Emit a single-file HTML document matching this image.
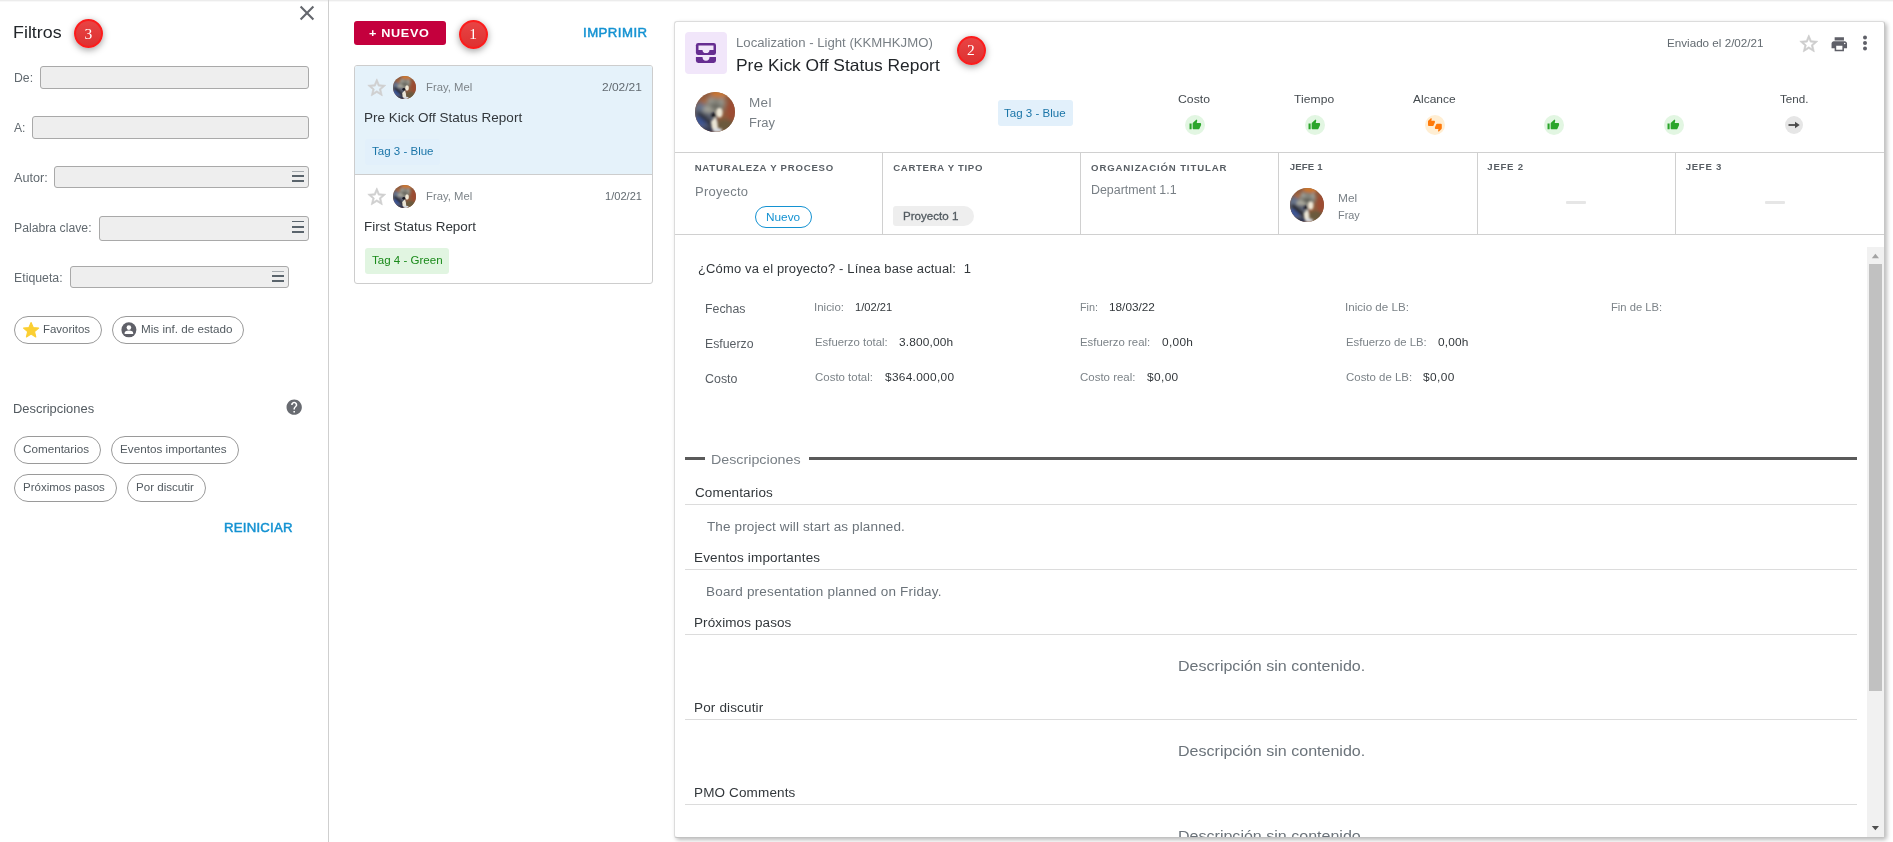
<!DOCTYPE html>
<html lang="es"><head><meta charset="utf-8"><title>Informes de estado</title>
<style>
html,body{margin:0;padding:0;background:#fff;}
body{width:1893px;height:842px;position:relative;overflow:hidden;font-family:"Liberation Sans", sans-serif;}
.t{position:absolute;white-space:nowrap;font-family:"Liberation Sans", sans-serif;}
.a{position:absolute;box-sizing:border-box;}
.badge{position:absolute;width:29px;height:29px;border-radius:50%;background:linear-gradient(#e84444,#de3131);box-sizing:border-box;border:2px solid #fb1c1c;box-shadow:0 2px 7px rgba(0,0,0,.38);}
.inp{position:absolute;box-sizing:border-box;background:#eee;border:1px solid #a9a9a9;border-radius:3px;}
.chip{position:absolute;box-sizing:border-box;border:1px solid #9a9a9a;border-radius:14px;height:28px;background:#fff;}
.tag{position:absolute;border-radius:3px;}
.vl{position:absolute;width:1px;background:#d0d0d0;}
.hl{position:absolute;height:1px;background:#d0d0d0;}
.ic{position:absolute;border-radius:50%;}
svg{position:absolute;overflow:visible;}

</style></head><body>
<svg width="0" height="0" style="left:0;top:0;"><defs>
<filter id="avb" x="-20%" y="-20%" width="140%" height="140%"><feGaussianBlur stdDeviation="5"/></filter>
<filter id="avs" x="-20%" y="-20%" width="140%" height="140%"><feGaussianBlur stdDeviation="2.600"/></filter>
<clipPath id="avc"><circle cx="50" cy="50" r="50"/></clipPath>
<symbol id="wolf" viewBox="0 0 100 100"><g clip-path="url(#avc)">
<rect width="100" height="100" fill="#8f5a3c"/>
<g filter="url(#avb)">
<ellipse cx="24" cy="58" rx="30" ry="40" fill="#5c6272"/>
<ellipse cx="60" cy="4" rx="22" ry="10" fill="#c9762f"/>
<ellipse cx="26" cy="24" rx="12" ry="8" fill="#a8683c"/>
<ellipse cx="92" cy="46" rx="12" ry="28" fill="#9c4c32"/>
<ellipse cx="76" cy="84" rx="24" ry="16" fill="#6a5a3c"/>
<ellipse cx="16" cy="40" rx="16" ry="11" fill="#66728a"/>
<ellipse cx="16" cy="72" rx="17" ry="13" fill="#3c5796"/>
<ellipse cx="32" cy="96" rx="18" ry="8" fill="#2a3350"/>
<ellipse cx="50" cy="34" rx="24" ry="21" fill="#85847a"/>
<path d="M6 50 L52 90" stroke="#2a2a2e" stroke-width="12" fill="none"/>
<ellipse cx="32" cy="44" rx="13" ry="7" fill="#a9a89c"/>
<path d="M32 28 L36 8 L48 24z" fill="#9c9c94"/><path d="M60 26 L70 9 L76 32z" fill="#9c9c94"/>
<ellipse cx="50" cy="36" rx="12" ry="6" fill="#62625a"/>
</g>
<g filter="url(#avs)">
<ellipse cx="61" cy="52" rx="8" ry="12" fill="#efe8d6"/>
<path d="M52 62 L40 74 L42 92 L58 94 L56 76z" fill="#e9e4d4"/>
<ellipse cx="56" cy="95" rx="12" ry="5" fill="#d6dae0"/>
<ellipse cx="47" cy="58" rx="6" ry="6" fill="#14141e"/>
</g></g></symbol></defs></svg>
<!-- top hairline -->
<div class="a" style="left:0;top:0;width:1893px;height:1px;background:#ececec;"></div>
<div class="a" style="left:0;top:1px;width:1893px;height:1px;background:#f8f8f8;"></div>

<!-- LEFT PANEL -->
<div class="vl" style="left:328px;top:0;height:842px;background:#cfcfcf;"></div>
<svg style="left:299px;top:5px;" width="16" height="16" viewBox="0 0 16 16"><path d="M1.600 1.600 L14.400 14.400 M14.400 1.600 L1.600 14.400" stroke="#64676d" stroke-width="2.100" fill="none"/></svg>
<div class="badge" style="left:73.700px;top:19.400px;"></div>
<div class="inp" style="left:40px;top:66px;width:269px;height:23px;"></div>
<div class="inp" style="left:32px;top:116px;width:277px;height:23px;"></div>
<div class="inp" style="left:54px;top:166px;width:255px;height:22px;"></div>
<div class="inp" style="left:99px;top:216px;width:210px;height:25px;"></div>
<div class="inp" style="left:70px;top:266px;width:219px;height:22px;"></div>

<div class="a" style="left:292px;top:171.0px;width:12px;height:0.6px;background:#5a646c;opacity:0.5;"></div>
<div class="a" style="left:292px;top:174.9px;width:12px;height:1.8px;background:#5a646c;"></div>
<div class="a" style="left:292px;top:179.8px;width:12px;height:2.1px;background:#5a646c;"></div>
<div class="a" style="left:292px;top:220.9px;width:12px;height:1.5px;background:#5a646c;"></div>
<div class="a" style="left:292px;top:225.8px;width:12px;height:1.9px;background:#5a646c;"></div>
<div class="a" style="left:292px;top:230.8px;width:12px;height:2.1px;background:#5a646c;"></div>
<div class="a" style="left:272px;top:271.0px;width:12px;height:0.6px;background:#5a646c;opacity:0.5;"></div>
<div class="a" style="left:272px;top:274.9px;width:12px;height:1.8px;background:#5a646c;"></div>
<div class="a" style="left:272px;top:279.8px;width:12px;height:2.1px;background:#5a646c;"></div>
<div class="chip" style="left:14px;top:316px;width:88px;"></div>
<div class="chip" style="left:112px;top:316px;width:132px;"></div>
<svg style="left:21.8px;top:321.2px;" width="18.2" height="18.2" viewBox="0 0 24 24"><path fill="#fbcf33" stroke="#fbcf33" stroke-width="1.5" stroke-linejoin="round" d="M12 17.27L18.18 21l-1.64-7.03L22 9.24l-7.19-.61L12 2 9.19 8.63 2 9.24l5.46 4.73L5.82 21z"/></svg>
<svg style="left:120px;top:321px;" width="18" height="18" viewBox="0 0 18 18"><circle cx="8.900" cy="8.850" r="7.500" fill="#5f6068"/><circle cx="8.900" cy="6.600" r="2.300" fill="#fff"/><path d="M4.600 13 v-.8 q0-2.600 4.300-2.600 q4.300 0 4.300 2.600 v.8 z" fill="#fff"/></svg>
<svg style="left:284.8px;top:397.8px;" width="18.4" height="18.4" viewBox="0 0 24 24"><path fill="#686b71" d="M12 2C6.48 2 2 6.48 2 12s4.48 10 10 10 10-4.48 10-10S17.52 2 12 2zm1 17h-2v-2h2v2zm2.07-7.75l-.9.92C13.45 12.9 13 13.5 13 15h-2v-.5c0-1.1.45-2.1 1.170-2.830l1.240-1.260c.37-.36.590-.86.590-1.410 0-1.100-.9-2-2-2s-2 .9-2 2H8c0-2.210 1.790-4 4-4s4 1.790 4 4c0 .88-.36 1.680-.930 2.250z"/></svg>
<div class="chip" style="left:14px;top:436px;width:87px;"></div>
<div class="chip" style="left:111px;top:436px;width:128px;"></div>
<div class="chip" style="left:14px;top:474px;width:103px;"></div>
<div class="chip" style="left:127px;top:474px;width:79px;"></div>

<!-- MIDDLE -->
<div class="a" style="left:354px;top:21px;width:92px;height:24px;background:#c4003d;border-radius:3px;"></div>
<div class="badge" style="left:458.800px;top:19.500px;"></div>
<div class="a" style="left:354px;top:65px;width:299px;height:219px;border:1px solid #cdcdcd;border-radius:3px;background:#fff;"></div>
<div class="a" style="left:355px;top:66px;width:297px;height:108px;background:#e5f2fa;border-radius:2px 2px 0 0;"></div>
<div class="hl" style="left:355px;top:174px;width:297px;background:#cdcdcd;"></div>
<svg style="left:366.1px;top:76.600px;" width="21.6" height="21.6" viewBox="0 0 24 24"><path fill="#cfcfcf" stroke="#cfcfcf" stroke-width=".7" stroke-linejoin="round" d="M22 9.24l-7.19-.62L12 2 9.19 8.63 2 9.24l5.46 4.73L5.82 21 12 17.27 18.180 21l-1.630-7.030L22 9.240zM12 15.400l-3.760 2.270 1-4.280-3.320-2.880 4.380-.38L12 6.100l1.710 4.040 4.380.38-3.320 2.880 1 4.280L12 15.400z"/></svg>
<svg style="left:366.1px;top:185.600px;" width="21.6" height="21.6" viewBox="0 0 24 24"><path fill="#cfcfcf" stroke="#cfcfcf" stroke-width=".7" stroke-linejoin="round" d="M22 9.24l-7.19-.62L12 2 9.19 8.63 2 9.24l5.46 4.73L5.82 21 12 17.27 18.180 21l-1.630-7.030L22 9.240zM12 15.400l-3.760 2.270 1-4.280-3.320-2.880 4.380-.38L12 6.100l1.710 4.040 4.380.38-3.320 2.880 1 4.280L12 15.400z"/></svg>
<svg style="left:393px;top:76px;" width="23" height="23" viewBox="0 0 100 100"><use href="#wolf"/></svg>
<svg style="left:393px;top:185px;" width="23" height="23" viewBox="0 0 100 100"><use href="#wolf"/></svg>
<div class="tag" style="left:365px;top:139px;width:75px;height:26px;background:#e2f0fb;"></div>
<div class="tag" style="left:365px;top:248px;width:84px;height:26px;background:#e1f5e1;"></div>

<!-- RIGHT PANEL -->
<div class="a" style="left:674px;top:21px;width:1211px;height:817px;border:1px solid #dcdcdc;border-right-color:#c6c6c6;border-bottom-color:#c2c2c2;border-radius:3px;background:#fff;box-shadow:2px 2px 4px rgba(0,0,0,.27);"></div>
<div class="a" style="left:685px;top:32px;width:42px;height:42px;background:#f1e6fa;border-radius:4px;"></div>
<svg style="left:685px;top:32px;" width="42" height="42" viewBox="685 32 42 42"><rect x="695.900" y="42.900" width="20.100" height="12.100" rx="2.300" fill="#662d91"/><path d="M698.500 45.500 H713.500 V50 H709.500 A3.500 3.100 0 0 1 702.500 50 H698.500 Z" fill="#f1e6fa"/><path d="M695.900 57.100 H702.500 A3.500 3.700 0 0 0 709.500 57.100 H716 V60.600 a2.300 2.300 0 0 1 -2.300 2.300 H698.200 a2.300 2.300 0 0 1 -2.300 -2.300 Z" fill="#662d91"/></svg>
<div class="badge" style="left:956.600px;top:35.700px;"></div>
<svg style="left:695px;top:92px;" width="40" height="40" viewBox="0 0 100 100"><use href="#wolf"/></svg>
<div class="tag" style="left:998px;top:100px;width:75px;height:26px;background:#e2f0fb;"></div>
<!-- status indicators -->
<div class="ic" style="left:1185px;top:115px;width:20px;height:20px;background:#e2f6e2;"></div>
<div class="ic" style="left:1304.5px;top:115px;width:20px;height:20px;background:#e2f6e2;"></div>
<div class="ic" style="left:1425px;top:115px;width:20px;height:20px;background:#ffeed3;"></div>
<div class="ic" style="left:1543.5px;top:115px;width:20px;height:20px;background:#e2f6e2;"></div>
<div class="ic" style="left:1663.5px;top:115px;width:20px;height:20px;background:#e2f6e2;"></div>
<div class="ic" style="left:1785px;top:116px;width:18px;height:18px;background:#e6e6e6;"></div>
<svg style="left:1188.6px;top:119.300px;" width="12.600" height="11.800" viewBox="0 0 24 24" preserveAspectRatio="none"><path id="thumb" fill="#2aa52a" d="M1 21h4V9H1v12zm22-11c0-1.100-.9-2-2-2h-6.310l.95-4.570.03-.32c0-.41-.17-.79-.44-1.060L14.170 1 7.590 7.590C7.220 7.950 7 8.450 7 9v10c0 1.100.9 2 2 2h9c.83 0 1.540-.5 1.840-1.220l3.020-7.050c.09-.23.140-.47.140-.730v-2z"/></svg>
<svg style="left:1308.1px;top:119.300px;" width="12.600" height="11.800" viewBox="0 0 24 24" preserveAspectRatio="none"><path fill="#2aa52a" d="M1 21h4V9H1v12zm22-11c0-1.100-.9-2-2-2h-6.310l.95-4.570.03-.32c0-.41-.17-.79-.44-1.060L14.170 1 7.590 7.590C7.220 7.950 7 8.450 7 9v10c0 1.100.9 2 2 2h9c.83 0 1.540-.5 1.840-1.220l3.020-7.050c.09-.23.140-.47.140-.730v-2z"/></svg>
<svg style="left:1547.1px;top:119.300px;" width="12.600" height="11.800" viewBox="0 0 24 24" preserveAspectRatio="none"><path fill="#2aa52a" d="M1 21h4V9H1v12zm22-11c0-1.100-.9-2-2-2h-6.310l.95-4.570.03-.32c0-.41-.17-.79-.44-1.060L14.170 1 7.590 7.590C7.220 7.950 7 8.450 7 9v10c0 1.100.9 2 2 2h9c.83 0 1.540-.5 1.840-1.220l3.020-7.050c.09-.23.140-.47.140-.730v-2z"/></svg>
<svg style="left:1667.1px;top:119.300px;" width="12.600" height="11.800" viewBox="0 0 24 24" preserveAspectRatio="none"><path fill="#2aa52a" d="M1 21h4V9H1v12zm22-11c0-1.100-.9-2-2-2h-6.310l.95-4.570.03-.32c0-.41-.17-.79-.44-1.060L14.170 1 7.590 7.590C7.220 7.950 7 8.450 7 9v10c0 1.100.9 2 2 2h9c.83 0 1.540-.5 1.840-1.220l3.020-7.050c.09-.23.140-.47.140-.730v-2z"/></svg>
<svg style="left:1428.1px;top:118.4px;" width="13.8" height="13.8" viewBox="0 0 24 24"><path fill="#ff7a0a" d="M12 6c0-.55-.45-1-1-1H5.820l.66-3.180.02-.23c0-.31-.13-.59-.33-.8L5.380 0 .44 4.940C.17 5.210 0 5.590 0 6v6.500c0 .83.67 1.500 1.500 1.500h6.750c.62 0 1.150-.38 1.380-.91l2.260-5.290c.07-.17.110-.36.110-.55V6zm10.500 4h-6.750c-.62 0-1.150.38-1.380.91l-2.260 5.290c-.07.17-.11.36-.11.55V18c0 .55.45 1 1 1h5.180l-.66 3.180-.02.24c0 .31.13.59.33.8l.79.78 4.940-4.940c.27-.27.44-.65.440-1.060v-6.500c0-.83-.67-1.500-1.500-1.500z"/></svg>
<svg style="left:1785px;top:116px;" width="18" height="18" viewBox="0 0 18 18"><path d="M3.500 9 H11" stroke="#4a4a4a" stroke-width="1.800" fill="none"/><path d="M10 5.800 L14.700 9 L10 12.200z" fill="#4a4a4a"/></svg>
<!-- header right icons -->
<svg style="left:1798.2px;top:33.1px;" width="21.6" height="21.6" viewBox="0 0 24 24"><path fill="#cdcdcd" stroke="#cdcdcd" stroke-width=".7" stroke-linejoin="round" d="M22 9.24l-7.19-.62L12 2 9.19 8.63 2 9.24l5.46 4.73L5.82 21 12 17.27 18.180 21l-1.630-7.030L22 9.240zM12 15.400l-3.760 2.270 1-4.280-3.320-2.880 4.380-.38L12 6.100l1.710 4.040 4.380.38-3.320 2.880 1 4.280L12 15.400z"/></svg>
<svg style="left:1829.7px;top:34.8px;" width="18.6" height="18.6" viewBox="0 0 24 24"><path fill="#5f6068" d="M19 8H5c-1.660 0-3 1.340-3 3v6h4v4h12v-4h4v-6c0-1.660-1.340-3-3-3zm-3 11H8v-5h8v5zm3-7c-.55 0-1-.45-1-1s.45-1 1-1 1 .45 1 1-.45 1-1 1zm-1-9H6v4h12V3z"/></svg>
<svg style="left:1860px;top:33px;" width="10" height="20" viewBox="0 0 10 20"><circle cx="5" cy="4.500" r="2" fill="#5f6068"/><circle cx="5" cy="10" r="2" fill="#5f6068"/><circle cx="5" cy="15.500" r="2" fill="#5f6068"/></svg>
<!-- table -->
<div class="hl" style="left:675px;top:152px;width:1209px;"></div>
<div class="hl" style="left:675px;top:234px;width:1209px;"></div>
<div class="vl" style="left:882px;top:153px;height:81px;"></div>
<div class="vl" style="left:1080px;top:153px;height:81px;"></div>
<div class="vl" style="left:1278px;top:153px;height:81px;"></div>
<div class="vl" style="left:1477px;top:153px;height:81px;"></div>
<div class="vl" style="left:1675px;top:153px;height:81px;"></div>
<div class="a" style="left:755px;top:206px;width:57px;height:22px;border:1.500px solid #1492d2;border-radius:11px;"></div>
<div class="a" style="left:892.7px;top:206px;width:81px;height:19.700px;background:#eee;border-radius:3px 10px 10px 3px;"></div>
<svg style="left:1290px;top:188px;" width="34" height="34" viewBox="0 0 100 100"><use href="#wolf"/></svg>
<div class="a" style="left:1566px;top:201px;width:20px;height:3px;background:#e6e6e6;border-radius:1px;"></div>
<div class="a" style="left:1765px;top:201px;width:20px;height:3px;background:#e6e6e6;border-radius:1px;"></div>
<!-- scrollbar -->
<div class="a" style="left:1867px;top:247px;width:17px;height:590px;background:#f1f1f1;"></div>
<div class="a" style="left:1869px;top:264px;width:13px;height:427px;background:#c1c1c1;"></div>
<svg style="left:1867px;top:247px;" width="17" height="17" viewBox="0 0 17 17"><path d="M4.800 11.200 L8.400 6.800 L12 11.200z" fill="#a3a3a3"/></svg>
<svg style="left:1867px;top:820px;" width="17" height="17" viewBox="0 0 17 17"><path d="M4.800 6 L8.400 10.200 L12 6z" fill="#505050"/></svg>
<!-- Descripciones section -->
<div class="a" style="left:685px;top:457px;width:20px;height:3px;background:#5a5a5a;"></div>
<div class="a" style="left:809px;top:457px;width:1048px;height:3px;background:#5a5a5a;"></div>
<div class="hl" style="left:685px;top:504px;width:1172px;background:#dcdcdc;"></div>
<div class="hl" style="left:685px;top:569px;width:1172px;background:#dcdcdc;"></div>
<div class="hl" style="left:685px;top:634px;width:1172px;background:#dcdcdc;"></div>
<div class="hl" style="left:685px;top:719px;width:1172px;background:#dcdcdc;"></div>
<div class="hl" style="left:685px;top:804px;width:1172px;background:#dcdcdc;"></div>

<div class="a" id="clip" style="left:0;top:0;width:1893px;height:837px;overflow:hidden;will-change:transform;">
<div class="t" style="left:12.77px;top:22.02px;font-size:16.5px;line-height:21px;color:#22262a;letter-spacing:0.022px;transform:scaleX(1.0800);transform-origin:0 0;">Filtros</div>
<div class="t" style="left:84.45px;top:24.00px;font-size:15.5px;line-height:20px;color:#fff;font-family:'Liberation Serif',serif;">3</div>
<div class="t" style="left:14.05px;top:70.02px;font-size:12px;line-height:16px;color:#626a70;transform:scaleX(1.0196);transform-origin:0 0;">De:</div>
<div class="t" style="left:13.85px;top:120.02px;font-size:12px;line-height:16px;color:#626a70;transform:scaleX(1.0087);transform-origin:0 0;">A:</div>
<div class="t" style="left:13.85px;top:170.02px;font-size:12px;line-height:16px;color:#626a70;transform:scaleX(1.0542);transform-origin:0 0;">Autor:</div>
<div class="t" style="left:13.85px;top:220.01px;font-size:12px;line-height:16px;color:#626a70;transform:scaleX(1.0197);transform-origin:0 0;">Palabra clave:</div>
<div class="t" style="left:14.05px;top:270.02px;font-size:12px;line-height:16px;color:#626a70;transform:scaleX(1.0269);transform-origin:0 0;">Etiqueta:</div>
<div class="t" style="left:43.15px;top:322.00px;font-size:11px;line-height:14px;color:#525a60;transform:scaleX(1.0408);transform-origin:0 0;">Favoritos</div>
<div class="t" style="left:141.35px;top:322.00px;font-size:11px;line-height:14px;color:#525a60;transform:scaleX(1.0605);transform-origin:0 0;">Mis inf. de estado</div>
<div class="t" style="left:12.86px;top:400.00px;font-size:13px;line-height:17px;color:#525a60;transform:scaleX(0.9933);transform-origin:0 0;">Descripciones</div>
<div class="t" style="left:22.95px;top:442.01px;font-size:11px;line-height:14px;color:#525a60;transform:scaleX(1.0611);transform-origin:0 0;">Comentarios</div>
<div class="t" style="left:119.95px;top:442.01px;font-size:11px;line-height:14px;color:#525a60;transform:scaleX(1.0638);transform-origin:0 0;">Eventos importantes</div>
<div class="t" style="left:22.95px;top:480.00px;font-size:11px;line-height:14px;color:#525a60;transform:scaleX(1.0463);transform-origin:0 0;">Próximos pasos</div>
<div class="t" style="left:135.95px;top:480.00px;font-size:11px;line-height:14px;color:#525a60;transform:scaleX(1.0532);transform-origin:0 0;">Por discutir</div>
<div class="t" style="left:223.85px;top:520.01px;font-size:12px;line-height:16px;color:#1492d2;letter-spacing:0.204px;transform:scaleX(1.1000);transform-origin:0 0;-webkit-text-stroke:0.45px #1492d2;">REINICIAR</div>
<div class="t" style="left:368.65px;top:26.00px;font-size:11.5px;line-height:15px;color:#fff;font-weight:700;letter-spacing:0.614px;transform:scaleX(1.1000);transform-origin:0 0;">+ NUEVO</div>
<div class="t" style="left:469.20px;top:24.00px;font-size:15.5px;line-height:20px;color:#fff;font-family:'Liberation Serif',serif;">1</div>
<div class="t" style="left:582.55px;top:25.01px;font-size:12px;line-height:16px;color:#1492d2;letter-spacing:0.425px;transform:scaleX(1.1000);transform-origin:0 0;-webkit-text-stroke:0.45px #1492d2;">IMPRIMIR</div>
<div class="t" style="left:426.05px;top:80.00px;font-size:11px;line-height:14px;color:#7c8388;transform:scaleX(1.0252);transform-origin:0 0;">Fray, Mel</div>
<div class="t" style="left:602.49px;top:80.00px;font-size:11px;line-height:14px;color:#626a70;transform:scaleX(1.0860);transform-origin:0 0;">2/02/21</div>
<div class="t" style="left:364.11px;top:109.00px;font-size:13px;line-height:17px;color:#32373b;transform:scaleX(1.0389);transform-origin:0 0;">Pre Kick Off Status Report</div>
<div class="t" style="left:371.55px;top:144.01px;font-size:11px;line-height:14px;color:#1b75a8;transform:scaleX(1.0481);transform-origin:0 0;">Tag 3 - Blue</div>
<div class="t" style="left:426.05px;top:189.00px;font-size:11px;line-height:14px;color:#7c8388;transform:scaleX(1.0252);transform-origin:0 0;">Fray, Mel</div>
<div class="t" style="left:605.21px;top:189.00px;font-size:11px;line-height:14px;color:#626a70;transform:scaleX(1.0068);transform-origin:0 0;">1/02/21</div>
<div class="t" style="left:364.12px;top:218.00px;font-size:13px;line-height:17px;color:#32373b;transform:scaleX(1.0338);transform-origin:0 0;">First Status Report</div>
<div class="t" style="left:371.55px;top:253.01px;font-size:11px;line-height:14px;color:#1a8a1a;transform:scaleX(1.0501);transform-origin:0 0;">Tag 4 - Green</div>
<div class="t" style="left:735.78px;top:35.00px;font-size:12.3px;line-height:16px;color:#787f85;transform:scaleX(1.0704);transform-origin:0 0;">Localization - Light (KKMHKJMO)</div>
<div class="t" style="left:735.80px;top:55.01px;font-size:16.5px;line-height:21px;color:#22262a;transform:scaleX(1.0545);transform-origin:0 0;">Pre Kick Off Status Report</div>
<div class="t" style="left:967.01px;top:40.00px;font-size:15.5px;line-height:20px;color:#fff;font-family:'Liberation Serif',serif;">2</div>
<div class="t" style="left:748.77px;top:95.00px;font-size:12.5px;line-height:16px;color:#787f85;letter-spacing:0.340px;transform:scaleX(1.0800);transform-origin:0 0;">Mel</div>
<div class="t" style="left:748.82px;top:115.01px;font-size:12.5px;line-height:16px;color:#787f85;transform:scaleX(1.0343);transform-origin:0 0;">Fray</div>
<div class="t" style="left:1004.05px;top:106.01px;font-size:11px;line-height:14px;color:#1b75a8;transform:scaleX(1.0498);transform-origin:0 0;">Tag 3 - Blue</div>
<div class="t" style="left:1178.31px;top:92.00px;font-size:11px;line-height:14px;color:#454b50;transform:scaleX(1.1125);transform-origin:0 0;">Costo</div>
<div class="t" style="left:1294.23px;top:92.00px;font-size:11px;line-height:14px;color:#454b50;letter-spacing:0.084px;transform:scaleX(1.0966);transform-origin:0 0;">Tiempo</div>
<div class="t" style="left:1413.14px;top:92.00px;font-size:11px;line-height:14px;color:#454b50;transform:scaleX(1.0884);transform-origin:0 0;">Alcance</div>
<div class="t" style="left:1780.07px;top:92.00px;font-size:11px;line-height:14px;color:#454b50;transform:scaleX(1.0577);transform-origin:0 0;">Tend.</div>
<div class="t" style="left:1666.95px;top:36.00px;font-size:11px;line-height:14px;color:#626a70;transform:scaleX(1.0592);transform-origin:0 0;">Enviado el 2/02/21</div>
<div class="t" style="left:694.65px;top:162.01px;font-size:9.6px;line-height:12px;color:#585e64;font-weight:700;letter-spacing:0.775px;">NATURALEZA Y PROCESO</div>
<div class="t" style="left:893.25px;top:162.01px;font-size:9.6px;line-height:12px;color:#585e64;font-weight:700;letter-spacing:0.680px;">CARTERA Y TIPO</div>
<div class="t" style="left:1091.05px;top:162.01px;font-size:9.6px;line-height:12px;color:#585e64;font-weight:700;letter-spacing:0.868px;">ORGANIZACIÓN TITULAR</div>
<div class="t" style="left:1289.65px;top:161.00px;font-size:9.6px;line-height:12px;color:#585e64;font-weight:700;letter-spacing:0.168px;">JEFE 1</div>
<div class="t" style="left:1487.35px;top:161.00px;font-size:9.6px;line-height:12px;color:#585e64;font-weight:700;letter-spacing:0.728px;">JEFE 2</div>
<div class="t" style="left:1685.65px;top:161.00px;font-size:9.6px;line-height:12px;color:#585e64;font-weight:700;letter-spacing:0.728px;">JEFE 3</div>
<div class="t" style="left:694.65px;top:184.01px;font-size:12px;line-height:16px;color:#787f85;letter-spacing:0.252px;transform:scaleX(1.0800);transform-origin:0 0;">Proyecto</div>
<div class="t" style="left:766.25px;top:210.00px;font-size:11px;line-height:14px;color:#1492d2;transform:scaleX(1.0733);transform-origin:0 0;">Nuevo</div>
<div class="t" style="left:903.05px;top:209.00px;font-size:11px;line-height:14px;color:#525a60;transform:scaleX(1.0540);transform-origin:0 0;-webkit-text-stroke:0.3px #525a60;">Proyecto 1</div>
<div class="t" style="left:1091.05px;top:182.01px;font-size:12px;line-height:16px;color:#787f85;transform:scaleX(1.0345);transform-origin:0 0;">Department 1.1</div>
<div class="t" style="left:1338.25px;top:191.01px;font-size:11px;line-height:14px;color:#787f85;transform:scaleX(1.0800);transform-origin:0 0;">Mel</div>
<div class="t" style="left:1338.25px;top:208.01px;font-size:11px;line-height:14px;color:#787f85;transform:scaleX(0.9911);transform-origin:0 0;">Fray</div>
<div class="t" style="left:698.15px;top:261.01px;font-size:12px;line-height:16px;color:#32373b;letter-spacing:0.148px;transform:scaleX(1.0800);transform-origin:0 0;">¿Cómo va el proyecto? - Línea base actual:  1</div>
<div class="t" style="left:705.15px;top:301.01px;font-size:12px;line-height:16px;color:#585e64;transform:scaleX(1.0292);transform-origin:0 0;">Fechas</div>
<div class="t" style="left:705.15px;top:336.01px;font-size:12px;line-height:16px;color:#585e64;transform:scaleX(1.0235);transform-origin:0 0;">Esfuerzo</div>
<div class="t" style="left:705.15px;top:371.01px;font-size:12px;line-height:16px;color:#585e64;transform:scaleX(1.0356);transform-origin:0 0;">Costo</div>
<div class="t" style="left:814.01px;top:300.00px;font-size:11px;line-height:14px;color:#7c8388;transform:scaleX(1.0441);transform-origin:0 0;">Inicio:</div>
<div class="t" style="left:854.65px;top:300.00px;font-size:11px;line-height:14px;color:#32373b;transform:scaleX(1.0114);transform-origin:0 0;">1/02/21</div>
<div class="t" style="left:815.05px;top:335.01px;font-size:11px;line-height:14px;color:#7c8388;transform:scaleX(1.0334);transform-origin:0 0;">Esfuerzo total:</div>
<div class="t" style="left:899.15px;top:335.01px;font-size:11px;line-height:14px;color:#32373b;letter-spacing:0.148px;transform:scaleX(1.0800);transform-origin:0 0;">3.800,00h</div>
<div class="t" style="left:815.05px;top:370.01px;font-size:11px;line-height:14px;color:#7c8388;transform:scaleX(1.0417);transform-origin:0 0;">Costo total:</div>
<div class="t" style="left:884.65px;top:370.01px;font-size:11px;line-height:14px;color:#32373b;letter-spacing:0.274px;transform:scaleX(1.0800);transform-origin:0 0;">$364.000,00</div>
<div class="t" style="left:1080.05px;top:300.00px;font-size:11px;line-height:14px;color:#7c8388;transform:scaleX(0.9846);transform-origin:0 0;">Fin:</div>
<div class="t" style="left:1109.25px;top:300.00px;font-size:11px;line-height:14px;color:#32373b;transform:scaleX(1.0726);transform-origin:0 0;">18/03/22</div>
<div class="t" style="left:1080.05px;top:335.01px;font-size:11px;line-height:14px;color:#7c8388;transform:scaleX(1.0338);transform-origin:0 0;">Esfuerzo real:</div>
<div class="t" style="left:1161.95px;top:335.01px;font-size:11px;line-height:14px;color:#32373b;letter-spacing:0.277px;transform:scaleX(1.0800);transform-origin:0 0;">0,00h</div>
<div class="t" style="left:1080.05px;top:370.01px;font-size:11px;line-height:14px;color:#7c8388;transform:scaleX(1.0427);transform-origin:0 0;">Costo real:</div>
<div class="t" style="left:1146.85px;top:370.01px;font-size:11px;line-height:14px;color:#32373b;letter-spacing:0.347px;transform:scaleX(1.0800);transform-origin:0 0;">$0,00</div>
<div class="t" style="left:1344.59px;top:300.00px;font-size:11px;line-height:14px;color:#7c8388;transform:scaleX(1.0558);transform-origin:0 0;">Inicio de LB:</div>
<div class="t" style="left:1345.65px;top:335.01px;font-size:11px;line-height:14px;color:#7c8388;transform:scaleX(1.0305);transform-origin:0 0;">Esfuerzo de LB:</div>
<div class="t" style="left:1437.75px;top:335.01px;font-size:11px;line-height:14px;color:#32373b;letter-spacing:0.162px;transform:scaleX(1.0800);transform-origin:0 0;">0,00h</div>
<div class="t" style="left:1345.65px;top:370.01px;font-size:11px;line-height:14px;color:#7c8388;transform:scaleX(1.0403);transform-origin:0 0;">Costo de LB:</div>
<div class="t" style="left:1423.25px;top:370.01px;font-size:11px;line-height:14px;color:#32373b;letter-spacing:0.393px;transform:scaleX(1.0800);transform-origin:0 0;">$0,00</div>
<div class="t" style="left:1611.05px;top:300.00px;font-size:11px;line-height:14px;color:#7c8388;transform:scaleX(1.0183);transform-origin:0 0;">Fin de LB:</div>
<div class="t" style="left:710.99px;top:451.00px;font-size:13.5px;line-height:18px;color:#787f85;transform:scaleX(1.0567);transform-origin:0 0;">Descripciones</div>
<div class="t" style="left:695.15px;top:485.00px;font-size:12.5px;line-height:16px;color:#32373b;letter-spacing:0.115px;transform:scaleX(1.0800);transform-origin:0 0;">Comentarios</div>
<div class="t" style="left:707.25px;top:519.01px;font-size:12.5px;line-height:16px;color:#6b737a;letter-spacing:0.118px;transform:scaleX(1.0800);transform-origin:0 0;">The project will start as planned.</div>
<div class="t" style="left:694.07px;top:550.01px;font-size:12.5px;line-height:16px;color:#32373b;letter-spacing:0.154px;transform:scaleX(1.0800);transform-origin:0 0;">Eventos importantes</div>
<div class="t" style="left:706.17px;top:584.01px;font-size:12.5px;line-height:16px;color:#6b737a;letter-spacing:0.176px;transform:scaleX(1.0800);transform-origin:0 0;">Board presentation planned on Friday.</div>
<div class="t" style="left:694.07px;top:615.00px;font-size:12.5px;line-height:16px;color:#32373b;letter-spacing:0.094px;transform:scaleX(1.0800);transform-origin:0 0;">Próximos pasos</div>
<div class="t" style="left:694.07px;top:700.00px;font-size:12.5px;line-height:16px;color:#32373b;letter-spacing:0.146px;transform:scaleX(1.0800);transform-origin:0 0;">Por discutir</div>
<div class="t" style="left:694.07px;top:785.00px;font-size:12.5px;line-height:16px;color:#32373b;letter-spacing:0.133px;transform:scaleX(1.0800);transform-origin:0 0;">PMO Comments</div>
<div class="t" style="left:1177.73px;top:656.01px;font-size:15px;line-height:20px;color:#6b737a;transform:scaleX(1.0692);transform-origin:0 0;">Descripción sin contenido.</div>
<div class="t" style="left:1177.73px;top:741.01px;font-size:15px;line-height:20px;color:#6b737a;transform:scaleX(1.0692);transform-origin:0 0;">Descripción sin contenido.</div>
<div class="t" style="left:1177.73px;top:826.01px;font-size:15px;line-height:20px;color:#6b737a;transform:scaleX(1.0692);transform-origin:0 0;">Descripción sin contenido.</div>
</div>


</body></html>
